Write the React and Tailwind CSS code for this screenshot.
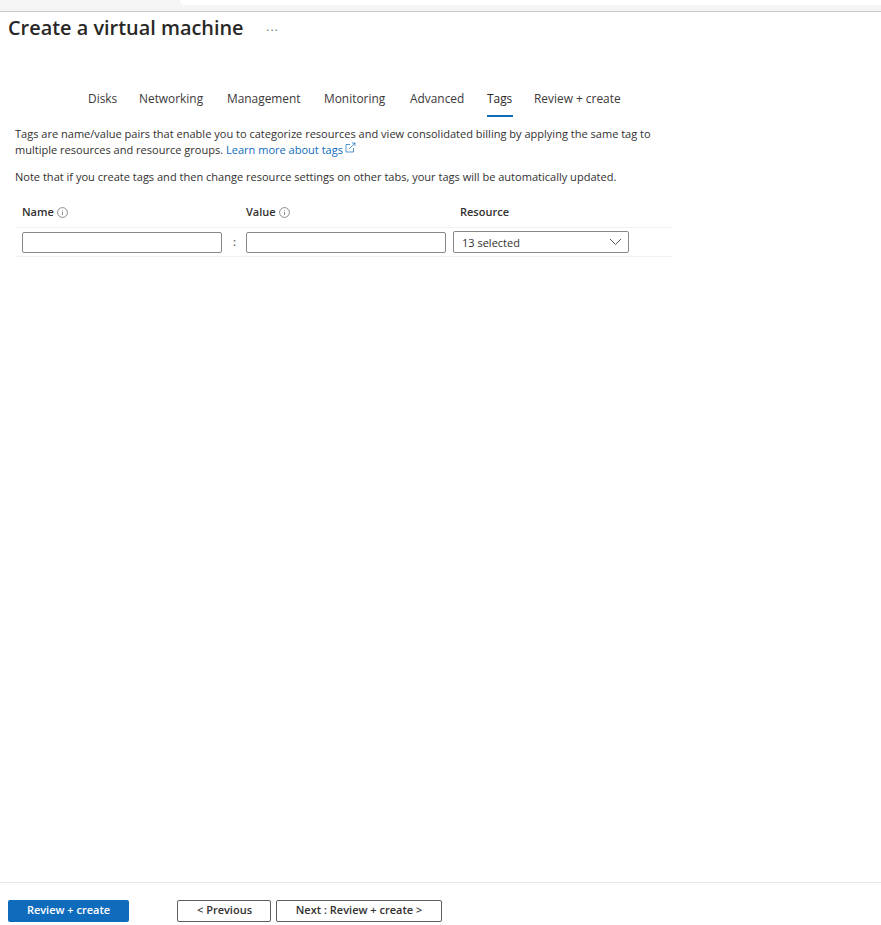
const tabs = ["Disks", "Networking", "Management", "Monitoring", "Advanced", "Tags", "Review + create"];
const tabWidths = ["w-[51px]", "w-[88px]", "w-[97px]", "w-[86px]", "w-[77px]", "w-[47px]", "w-auto"];

function InfoIcon() {
  return (
    <svg width="11" height="11" viewBox="0 0 11 11" fill="none" stroke="#5a5a5a" strokeWidth="0.7">
      <circle cx="5.5" cy="5.5" r="4.9" />
      <path d="M5.5 4.8v3.2M5.5 3v.8" />
    </svg>
  );
}

function ExternalIcon() {
  return (
    <svg className="ml-[2px] inline-block align-[1px]" width="11" height="11" viewBox="0 0 11 11" fill="none" stroke="#0f6cbd" strokeWidth="0.7">
      <path d="M5 2.5H1v7.5h7.5V6" />
      <path d="M4 7l6-6M7 1h3v3" />
    </svg>
  );
}

export default function App() {
  return (
    <div className="h-[925px] w-[881px] flex flex-col overflow-hidden bg-white text-[#323130]" style={{ fontFamily: "'Open Sans', sans-serif" }}>
      <div className="h-[12px] shrink-0 border-b border-[#c8c8c8] bg-[#f5f5f5]">
        <div className="ml-[180px] h-[5px] rounded-bl-[4px] bg-white" />
      </div>

      <div className="h-[32px] shrink-0 flex items-center pl-2">
        <h1 className="text-[19.9px] font-semibold leading-none text-[#292827]">Create a virtual machine</h1>
        <span className="ml-[23px] mb-[3px] text-[10px] leading-none tracking-[1.5px] text-[#444]">...</span>
      </div>

      <div className="mt-[41px] h-[29px] shrink-0 flex pl-[88px]">
        {tabs.map((tab, i) => (
          <div key={tab} className={tabWidths[i]}>
            <div className={"inline-block h-[29px] pt-[2px] text-[11.9px] leading-[16px] " + (tab === "Tags" ? "w-[26px] border-b-2 border-[#0f6cbd] font-medium text-[#292827]" : "text-[#3b3a39]")}>
              {tab}
            </div>
          </div>
        ))}
      </div>

      <div className="mt-[12px] pl-[15px] text-[11.04px] leading-[16px] text-[#323130]">
        <p className="w-[640px]">
          Tags are name/value pairs that enable you to categorize resources and view consolidated billing by applying the same tag to multiple resources and resource groups.{" "}
          <a className="text-[#0f6cbd]">Learn more about tags<ExternalIcon /></a>
        </p>
        <p className="mt-[11px]">Note that if you create tags and then change resource settings on other tabs, your tags will be automatically updated.</p>
      </div>

      <div className="mt-[19px] ml-[16px] w-[656px] text-[11px]">
        <div className="flex h-[23px] items-start font-semibold text-[#323130]">
          <div className="w-[224px] pl-[6px] flex items-center gap-[3px] leading-[16px]">Name <InfoIcon /></div>
          <div className="w-[214px] pl-[6px] flex items-center gap-[3px] leading-[16px]">Value <InfoIcon /></div>
          <div className="pl-[6px] leading-[16px]">Resource</div>
        </div>
        <div className="flex h-[30px] items-center border-y border-[#f3f2f1] pl-[6px]">
          <input className="h-[21px] w-[200px] border border-[#8a8886] rounded-[2px] bg-white" />
          <span className="w-[24px] pl-[1px] text-center text-[11px] font-semibold text-[#555]">:</span>
          <input className="h-[21px] w-[200px] border border-[#8a8886] rounded-[2px] bg-white" />
          <div className="ml-[7px] h-[22px] w-[176px] flex items-center justify-between border border-[#8a8886] rounded-[2px] pl-2 pr-[6px] text-[#323130]">
            <span className="pt-[2px] font-normal">13 selected</span>
            <svg width="13" height="8" viewBox="0 0 13 8" fill="none" stroke="#555" strokeWidth="1">
              <path d="M1 1l5.5 5.5L12 1" />
            </svg>
          </div>
        </div>
      </div>

      <div className="mt-auto h-[43px] shrink-0 flex items-start border-t border-[#e6e6e6] pl-2 pt-[17px] text-[11px]">
        <button className="h-[22px] w-[121px] rounded-[2px] bg-[#0f6cbd] pb-[3px] font-semibold leading-none text-white">Review + create</button>
        <button className="ml-[48px] h-[22px] w-[94px] rounded-[2px] border border-[#5e5e5e] pb-[3px] pl-[1px] font-semibold leading-none text-[#323130]">&lt; Previous</button>
        <button className="ml-[5px] h-[22px] w-[166px] rounded-[2px] border border-[#5e5e5e] pb-[3px] font-semibold leading-none text-[#323130]">Next : Review + create &gt;</button>
      </div>
    </div>
  );
}
